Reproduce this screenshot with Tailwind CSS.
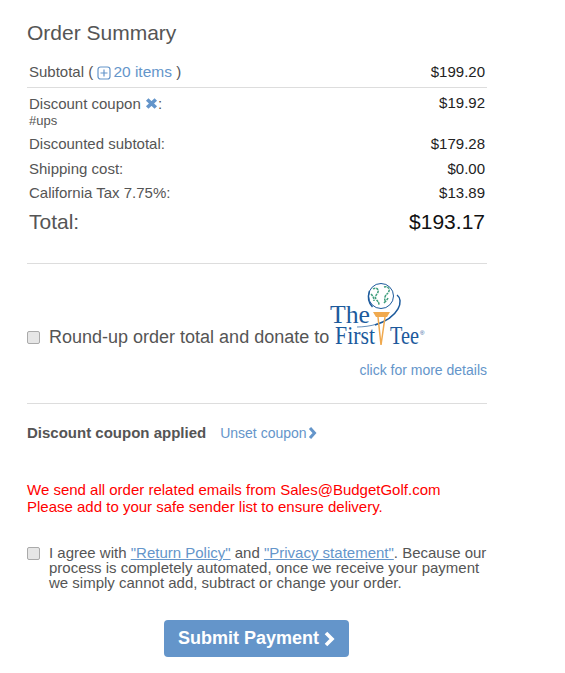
<!DOCTYPE html>
<html lang="en">
<head>
  <meta charset="UTF-8" />
  <title>Order Summary</title>
  <script src="https://cdn.jsdelivr.net/npm/@tailwindcss/browser@4"></script>
</head>
<body class="bg-white font-['Liberation_Sans',Arial,sans-serif] text-[#555]">
  <div class="w-[460px] ml-[27px] pt-[20px]">
    <h2 class="text-[21px] leading-[26px] text-[#555]">Order Summary</h2>

    <div class="flex justify-between px-[2px] mt-[13px] h-[29px] border-b border-[#ddd] text-[15px] leading-[26px]">
      <span>Subtotal ( <a class="text-[#6495ca] text-[15.5px]"><svg class="inline w-[14px] h-[14px] mr-[2px] align-[-3px]" viewBox="0 0 14 14" fill="none" stroke="#6495ca" stroke-width="1.2"><rect x="1" y="1" width="12" height="12" rx="2.5"/><path d="M7 3.500v7M3.500 7h7"/></svg>20 items</a> )</span>
      <span class="text-[#222]">$199.20</span>
    </div>

    <div class="flex justify-between px-[2px] pt-[7px] text-[15px] leading-[17px]">
      <div>
        <div>Discount coupon <svg class="inline w-[13px] h-[13px] align-[-1px]" viewBox="0 0 13 13" fill="none" stroke="#6495ca" stroke-width="3.6"><path d="M2.200 2.500l8.600 8M10.800 2.500l-8.600 8"/></svg>:</div>
        <div class="text-[13px] leading-[15px] mt-[1px]">#ups</div>
      </div>
      <span class="text-[#222] -mt-[1px]">$19.92</span>
    </div>

    <div class="flex flex-col gap-[7px] mt-[7px] text-[15px] leading-[17px] px-[2px]">
      <div class="flex justify-between"><span>Discounted subtotal:</span><span class="text-[#222]">$179.28</span></div>
      <div class="flex justify-between mt-[1px]"><span>Shipping cost:</span><span class="text-[#222]">$0.00</span></div>
      <div class="flex justify-between"><span>California Tax 7.75%:</span><span class="text-[#222]">$13.89</span></div>
    </div>
    <div class="flex justify-between items-center px-[2px] mt-[8px] h-[26px] text-[21px]"><span>Total:</span><span class="text-[#111]">$193.17</span></div>

    <div class="mt-[28px] border-t border-[#ddd] h-[140px] flex flex-col">
      <div class="flex items-end h-[86px]">
        <input type="checkbox" class="appearance-none w-[13px] h-[13px] rounded-[2px] border border-[#aaa] bg-[#e6e6e6] mb-[6px] mr-[9px]" />
        <span class="text-[18px] leading-[25px]">Round-up order total and donate to</span>
      </div>
      <div class="absolute left-[330px] top-[280px] w-[100px] h-[70px]">
        <svg class="w-[100px] h-[70px] overflow-visible" viewBox="0 0 100 70" fill="none">
          <circle cx="51" cy="16" r="12.500" stroke="#1c5a9c" stroke-width="1"/>
          <path d="M39.500 11c-2 6-1 12 3 16" stroke="#1c5a9c" stroke-width="1.400"/>
          <path d="M43 9c3-2 6 0 5 3s-4 4-2 7 3 3 3 6M54 7c3-1 6 1 5 4s-3 3-4 6 1 4-1 6M41 14c2 2 3 4 3 7M58 18c-1 2-2 3-3 4" stroke="#3f9e7d" stroke-width="1.500" stroke-dasharray="2.500 0.800"/>
          <path d="M67 15C74 20 70 37 45 45" stroke="#1c5a9c" stroke-width="1.500"/>
          <path d="M27 47c6 0 14-1 20-3" stroke="#1c5a9c" stroke-width="0.700"/>
          <path d="M43 32h17l-3 5H46z" fill="#f0a94e"/>
          <path d="M48 37l3 28 4-28" stroke="#f0a94e" stroke-width="1.500"/>
          <text x="0" y="43" font-family="Liberation Serif" font-size="26" fill="#1c5a9c" textLength="40" lengthAdjust="spacingAndGlyphs">The</text>
          <text x="5" y="64" font-family="Liberation Serif" font-size="26" fill="#1c5a9c" textLength="40" lengthAdjust="spacingAndGlyphs">First</text>
          <text x="60" y="64" font-family="Liberation Serif" font-size="26" fill="#1c5a9c" textLength="29" lengthAdjust="spacingAndGlyphs">Tee</text>
          <text x="90" y="55" font-family="Liberation Sans" font-size="6" fill="#1c5a9c">®</text>
        </svg>
      </div>
      <a class="self-end text-[14px] leading-[18px] text-[#6495ca] mt-[11px]">click for more details</a>
    </div>

    <div class="border-t border-[#ddd] pt-[20px] flex items-center text-[15px] leading-[18px]">
      <b class="font-bold">Discount coupon applied</b>
      <a class="ml-[14px] text-[14px] text-[#6495ca]">Unset coupon</a>
      <svg class="w-[9px] h-[12px] ml-[1px]" viewBox="0 0 9 12" fill="none" stroke="#6495ca" stroke-width="3"><path d="M2 1l4.500 5L2 11"/></svg>
    </div>

    <p class="mt-[39px] text-[15px] leading-[17px] text-[#f00]">We send all order related emails from Sales@BudgetGolf.com<br />Please add to your safe sender list to ensure delivery.</p>

    <div class="flex mt-[30px] text-[15px] leading-[15px]">
      <input type="checkbox" class="appearance-none w-[13px] h-[13px] rounded-[2px] border border-[#aaa] bg-[#e6e6e6] mt-[2px] mr-[9px] shrink-0" />
      <p>I agree with <a class="text-[#6495ca] underline">"Return Policy"</a> and <a class="text-[#6495ca] underline">"Privacy statement"</a>. Because our process is completely automated, once we receive your payment we simply cannot add, subtract or change your order.</p>
    </div>

    <button class="flex items-center justify-center gap-[4px] ml-[137px] mt-[30px] w-[185px] h-[37px] rounded-[4px] bg-[#6495ca] text-white font-bold text-[18px]">Submit Payment
      <svg class="w-[12px] h-[16px]" viewBox="0 0 12 16" fill="none" stroke="#fff" stroke-width="3.600"><path d="M3 2l6 6-6 6"/></svg>
    </button>
  </div>
</body>
</html>
